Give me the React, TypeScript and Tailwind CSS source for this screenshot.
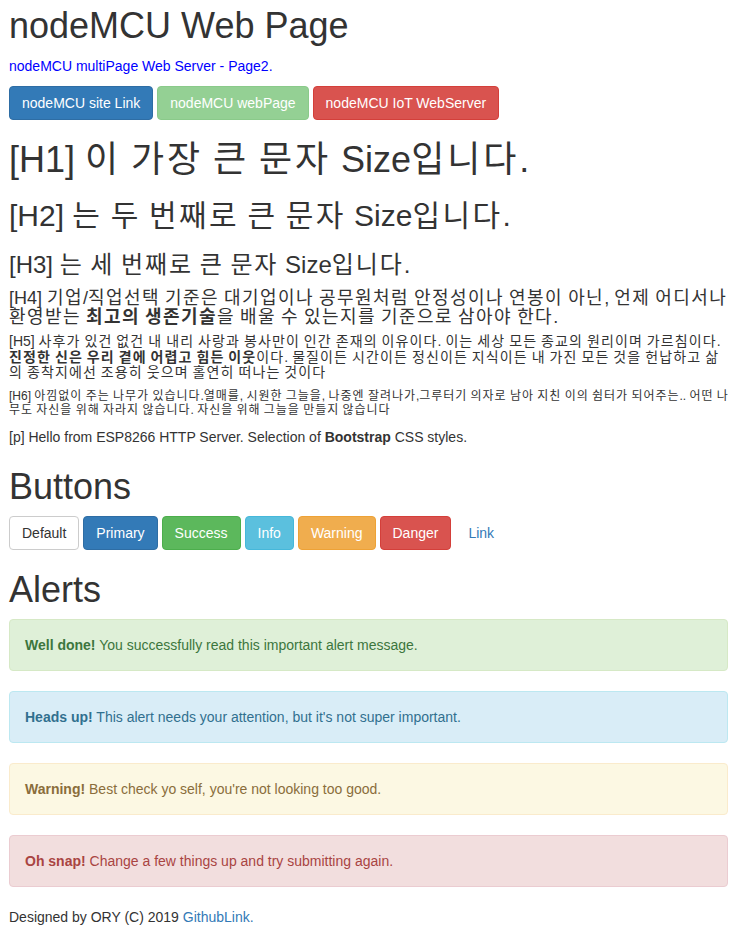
import React from "react";

const Btn = ({ children, cls }: { children: React.ReactNode; cls: string }) => (
  <button
    className={`inline-block border rounded-[4px] px-[12px] py-[6px] text-[14px] leading-[20px] whitespace-nowrap ${cls}`}
  >
    {children}
  </button>
);

const K = ({ t }: { t: string }) => (
  <>
    {t.split(/([\uAC00-\uD7A3]+)/).map((s, i) =>
      /[\uAC00-\uD7A3]/.test(s) ? (
        <span key={i} className="tracking-[0.08em]">
          {s}
        </span>
      ) : (
        <React.Fragment key={i}>{s}</React.Fragment>
      )
    )}
  </>
);

export default function App() {
  return (
    <div className="min-h-screen bg-white text-[#333] text-[14px] leading-[20px] font-['Liberation_Sans','Noto_Sans_CJK_KR',sans-serif] pl-[9px] pr-[6px] pt-px pb-[10px]">
      <h1 className="text-[36px] leading-[1.1] font-normal mt-[5px] mb-[10px]">nodeMCU Web Page</h1>
      <p className="mb-[10px]">
        <a className="text-[#0000ff]">nodeMCU multiPage Web Server - Page2.</a>
      </p>
      <div className="flex gap-[4px]">
        <Btn cls="bg-[#337ab7] border-[#2e6da4] text-white">nodeMCU site Link</Btn>
        <Btn cls="bg-[#5cb85c] border-[#4cae4c] text-white opacity-65">nodeMCU webPage</Btn>
        <Btn cls="bg-[#d9534f] border-[#d43f3a] text-white">nodeMCU IoT WebServer</Btn>
      </div>

      <h1 className="text-[36px] leading-[1.1] font-normal mt-[20px] mb-[10px] whitespace-nowrap">
        <K t="[H1] 이 가장 큰 문자 Size입니다." />
      </h1>
      <h2 className="text-[30px] leading-[1.1] font-normal mt-[20px] mb-[10px] whitespace-nowrap">
        <K t="[H2] 는 두 번째로 큰 문자 Size입니다." />
      </h2>
      <h3 className="text-[24px] leading-[1.1] font-normal mt-[20px] mb-[10px] whitespace-nowrap">
        <K t="[H3] 는 세 번째로 큰 문자 Size입니다." />
      </h3>
      <h4 className="text-[18px] leading-[1.1] font-normal mt-[10px] mb-[6px] whitespace-nowrap">
        <K t="[H4] 기업/직업선택 기준은 대기업이나 공무원처럼 안정성이나 연봉이 아닌, 언제 어디서나" />
        <br />
        <K t="환영받는 " />
        <b className="font-bold">
          <K t="최고의 생존기술" />
        </b>
        <K t="을 배울 수 있는지를 기준으로 삼아야 한다." />
      </h4>
      <h5 className="text-[14px] leading-[1.1] font-normal mt-[6px] mb-[10px] whitespace-nowrap">
        <K t="[H5] 사후가 있건 없건 내 내리 사랑과 봉사만이 인간 존재의 이유이다. 이는 세상 모든 종교의 원리이며 가르침이다." />
        <br />
        <b className="font-bold">
          <K t="진정한 신은 우리 곁에 어렵고 힘든 이웃" />
        </b>
        <K t="이다. 물질이든 시간이든 정신이든 지식이든 내 가진 모든 것을 헌납하고 삶" />
        <br />
        <K t="의 종착지에선 조용히 웃으며 홀연히 떠나는 것이다" />
      </h5>
      <h6 className="text-[12px] leading-[1.1] font-normal mt-[10px] mb-[10px] whitespace-nowrap">
        <K t="[H6] 아낌없이 주는 나무가 있습니다.열매를, 시원한 그늘을, 나중엔 잘려나가,그루터기 의자로 남아 지친 이의 쉼터가 되어주는.. 어떤 나" />
        <br />
        <K t="무도 자신을 위해 자라지 않습니다. 자신을 위해 그늘을 만들지 않습니다" />
      </h6>
      <p className="mb-[10px]">
        [p] Hello from ESP8266 HTTP Server. Selection of <b className="font-bold">Bootstrap</b> CSS styles.
      </p>

      <h1 className="text-[36px] leading-[1.1] font-normal mt-[20px] mb-[10px]">Buttons</h1>
      <div className="flex gap-[4px]">
        <Btn cls="bg-white border-[#ccc] text-[#333]">Default</Btn>
        <Btn cls="bg-[#337ab7] border-[#2e6da4] text-white">Primary</Btn>
        <Btn cls="bg-[#5cb85c] border-[#4cae4c] text-white">Success</Btn>
        <Btn cls="bg-[#5bc0de] border-[#46b8da] text-white">Info</Btn>
        <Btn cls="bg-[#f0ad4e] border-[#eea236] text-white">Warning</Btn>
        <Btn cls="bg-[#d9534f] border-[#d43f3a] text-white">Danger</Btn>
        <Btn cls="bg-transparent border-transparent text-[#337ab7]">Link</Btn>
      </div>

      <h1 className="text-[36px] leading-[1.1] font-normal mt-[20px] mb-[9px]">Alerts</h1>
      <div className="border rounded-[4px] p-[15px] mb-[20px] bg-[#dff0d8] border-[#d6e9c6] text-[#3c763d]">
        <b className="font-bold">Well done!</b> You successfully read this important alert message.
      </div>
      <div className="border rounded-[4px] p-[15px] mb-[20px] bg-[#d9edf7] border-[#bce8f1] text-[#31708f]">
        <b className="font-bold">Heads up!</b> This alert needs your attention, but it's not super important.
      </div>
      <div className="border rounded-[4px] p-[15px] mb-[20px] bg-[#fcf8e3] border-[#faebcc] text-[#8a6d3b]">
        <b className="font-bold">Warning!</b> Best check yo self, you're not looking too good.
      </div>
      <div className="border rounded-[4px] p-[15px] mb-[20px] bg-[#f2dede] border-[#ebccd1] text-[#a94442]">
        <b className="font-bold">Oh snap!</b> Change a few things up and try submitting again.
      </div>
      <p>
        Designed by ORY (C) 2019 <a className="text-[#337ab7]">GithubLink.</a>
      </p>
    </div>
  );
}
